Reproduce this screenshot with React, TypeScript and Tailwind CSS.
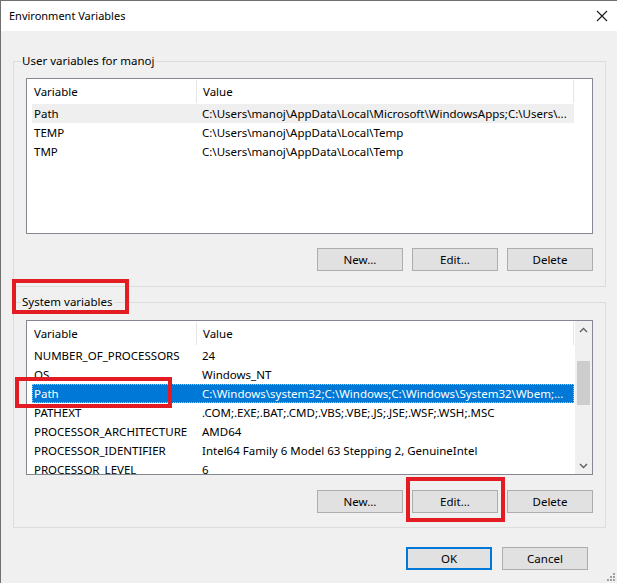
import React from "react";

type Row = { name: string; value: string; state?: "hover" | "selected" };

const userRows: Row[] = [
  { name: "Path", value: "C:\\Users\\manoj\\AppData\\Local\\Microsoft\\WindowsApps;C:\\Users\\...", state: "hover" },
  { name: "TEMP", value: "C:\\Users\\manoj\\AppData\\Local\\Temp" },
  { name: "TMP", value: "C:\\Users\\manoj\\AppData\\Local\\Temp" },
];

const sysRows: Row[] = [
  { name: "NUMBER_OF_PROCESSORS", value: "24" },
  { name: "OS", value: "Windows_NT" },
  { name: "Path", value: "C:\\Windows\\system32;C:\\Windows;C:\\Windows\\System32\\Wbem;...", state: "selected" },
  { name: "PATHEXT", value: ".COM;.EXE;.BAT;.CMD;.VBS;.VBE;.JS;.JSE;.WSF;.WSH;.MSC" },
  { name: "PROCESSOR_ARCHITECTURE", value: "AMD64" },
  { name: "PROCESSOR_IDENTIFIER", value: "Intel64 Family 6 Model 63 Stepping 2, GenuineIntel" },
  { name: "PROCESSOR_LEVEL", value: "6" },
];

function Header() {
  return (
    <div className="flex h-[25px] w-[547px] shrink-0 bg-white">
      <div className="flex w-[169px] items-center pl-[7px]">
        <span>Variable</span>
      </div>
      <div className="my-[1px] w-px bg-[#e5e5e5]" />
      <div className="flex flex-1 items-center pl-[6px]">
        <span>Value</span>
      </div>
      <div className="my-[1px] w-px bg-[#e5e5e5]" />
    </div>
  );
}

function ListRow({ row }: { row: Row }) {
  const base = "ml-[5px] flex h-[19px] w-[542px] shrink-0 items-center";
  const cls =
    row.state === "selected"
      ? `${base} bg-[#0078d7] text-white outline outline-1 outline-dotted outline-[#99c9ef] -outline-offset-1`
      : row.state === "hover"
      ? `${base} bg-[#efefef]`
      : base;
  return (
    <div className={cls}>
      <div className="w-[164px] shrink-0 whitespace-nowrap pl-[2px]">{row.name}</div>
      <div className="min-w-0 flex-1 overflow-hidden whitespace-nowrap pl-[6px]">{row.value}</div>
    </div>
  );
}

function Chevron({ up }: { up: boolean }) {
  return (
    <svg width="9" height="6" viewBox="0 0 9 6">
      <path
        d={up ? "M1 5 L4.5 1.5 L8 5" : "M1 1 L4.5 4.5 L8 1"}
        fill="none"
        stroke="#606060"
        strokeWidth="1.4"
      />
    </svg>
  );
}

function Btn({ label, primary }: { label: string; primary?: boolean }) {
  return (
    <div
      className={
        primary
          ? "flex h-[23px] w-[86px] items-center justify-center border-2 border-[#0078d7] bg-[#e1e1e1]"
          : "flex h-[23px] w-[86px] items-center justify-center border border-[#adadad] bg-[#e1e1e1]"
      }
    >
      {label}
    </div>
  );
}

function Group({
  label,
  pt,
  listH,
  btnGap,
  children,
}: {
  label: string;
  pt: string;
  listH: string;
  btnGap: string;
  children: React.ReactNode;
}) {
  return (
    <div className={`relative ml-[12px] h-[226px] w-[593px] border border-[#dcdcdc] pl-[12px] ${pt}`}>
      <div className="absolute left-[7px] top-[-9px] bg-[#f0f0f0] px-[1px] leading-[16px]">{label}</div>
      <div className={`w-[567px] ${listH} overflow-hidden border border-[#828790] bg-white`}>{children}</div>
      <div className={`${btnGap} flex w-[567px] justify-end gap-[9px]`}>
        <Btn label="New..." />
        <Btn label="Edit..." />
        <Btn label="Delete" />
      </div>
    </div>
  );
}

export default function App() {
  return (
    <div className="relative h-[583px] w-[617px] overflow-hidden border-l border-t border-[#707070] bg-[#f0f0f0] font-['Noto_Sans',sans-serif] text-[11.5px] text-black">
      {/* title bar */}
      <div className="flex h-[30px] items-center justify-between bg-white pl-[8px] pr-[8px]">
        <span className="text-[11px]">Environment Variables</span>
        <svg width="12" height="12" viewBox="0 0 12 12" className="mr-[1px]">
          <path d="M1 1 L11 11 M11 1 L1 11" stroke="#1a1a1a" strokeWidth="1.1" />
        </svg>
      </div>

      <div className="flex flex-col pt-[30px]">
        <Group label="User variables for manoj" pt="pt-[16px]" listH="h-[156px]" btnGap="mt-[14px]">
          <div className="flex h-full flex-col">
            <Header />
            {userRows.map((r) => (
              <ListRow key={r.name} row={r} />
            ))}
          </div>
        </Group>

        <div className="mt-[15px]">
          <Group label="System variables" pt="pt-[17px]" listH="h-[155px]" btnGap="mt-[15px]">
            <div className="flex h-full">
              <div className="flex min-w-0 flex-1 flex-col overflow-hidden">
                <Header />
                {sysRows.map((r) => (
                  <ListRow key={r.name} row={r} />
                ))}
              </div>
              <div className="flex w-[17px] shrink-0 flex-col bg-[#f0f0f0]">
                <div className="flex h-[17px] items-center justify-center">
                  <Chevron up />
                </div>
                <div className="flex-1">
                  <div className="mx-[2px] mt-[23px] h-[44px] bg-[#cdcdcd]" />
                </div>
                <div className="flex h-[17px] items-center justify-center">
                  <Chevron up={false} />
                </div>
              </div>
            </div>
          </Group>
        </div>

        <div className="mt-[19px] flex justify-end gap-[10px] pr-[29px]">
          <Btn label="OK" primary />
          <Btn label="Cancel" />
        </div>
      </div>

      {/* size grip */}
      <svg width="10" height="10" viewBox="0 0 10 10" className="absolute bottom-[1px] right-[1px]">
        <g fill="#a0a0a0">
          <rect x="7" y="1" width="2" height="2" />
          <rect x="4" y="4" width="2" height="2" />
          <rect x="7" y="4" width="2" height="2" />
          <rect x="1" y="7" width="2" height="2" />
          <rect x="4" y="7" width="2" height="2" />
          <rect x="7" y="7" width="2" height="2" />
        </g>
      </svg>

      {/* red annotation boxes */}
      <div className="absolute left-[11px] top-[278px] h-[35px] w-[117px] border-4 border-[#e31b23]" />
      <div className="absolute left-[14px] top-[376px] h-[31px] w-[157px] border-4 border-[#e31b23]" />
      <div className="absolute left-[405px] top-[476px] h-[45px] w-[99px] border-4 border-[#e31b23]" />
    </div>
  );
}
